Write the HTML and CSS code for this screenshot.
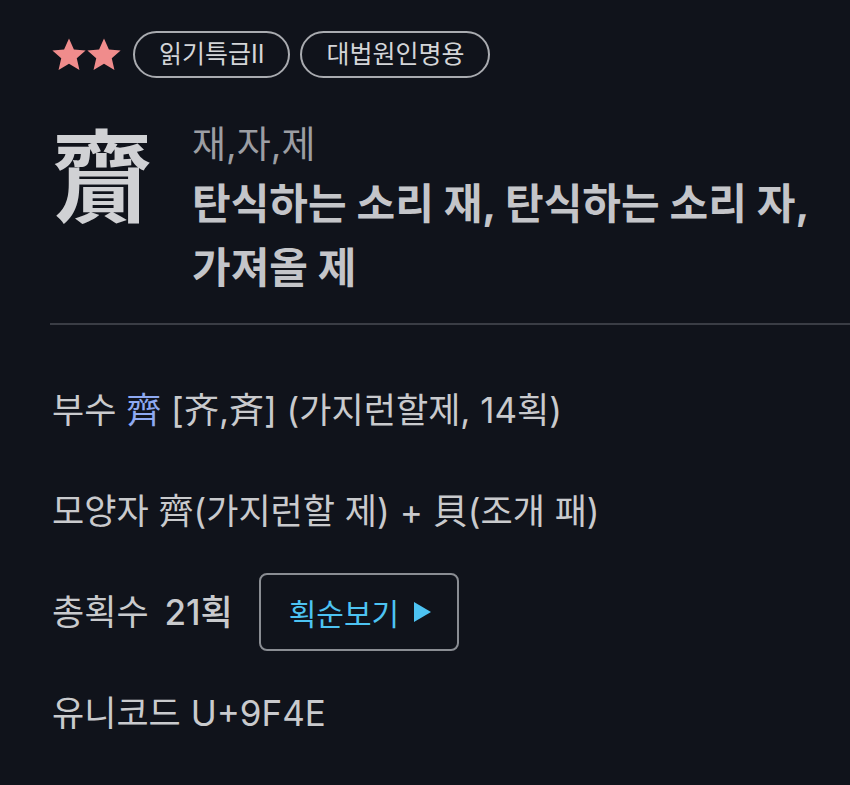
FILE: index.html
```html
<!DOCTYPE html>
<html lang="ko">
<head>
    <meta charset="UTF-8">
    <meta name="viewport" content="width=device-width, initial-scale=1.0">
    <title>齎 - 한자 상세</title>
    <link rel="stylesheet" href="styles.css">
</head>
<body>
    <div class="page">
        <div class="tags">
            <div class="stars">
                <svg width="38" height="38" viewBox="0 0 24 24"><path d="M12 1.5l3.1 7 7.4.6-5.6 4.9 1.7 7.4L12 17.5l-6.6 3.9 1.7-7.4L1.5 9.1l7.4-.6z"/></svg>
                <svg width="38" height="38" viewBox="0 0 24 24"><path d="M12 1.5l3.1 7 7.4.6-5.6 4.9 1.7 7.4L12 17.5l-6.6 3.9 1.7-7.4L1.5 9.1l7.4-.6z"/></svg>
            </div>
            <span class="pill">읽기특급II</span>
            <span class="pill">대법원인명용</span>
        </div>

        <div class="head">
            <div class="hanja">齎</div>
            <div class="info">
                <div class="readings">재,자,제</div>
                <div class="meaning">탄식하는 소리 재, 탄식하는 소리 자, 가져올 제</div>
            </div>
        </div>
    </div>

    <hr class="divider">

    <div class="page details">
        <div class="row">부수 <span class="radical">齊</span> [齐,斉] (가지런할제, 14획)</div>
        <div class="row">모양자 齊(가지런할 제) + 貝(조개 패)</div>
        <div class="row row-flex">
            <span>총획수 <span class="count">21획</span></span>
            <button class="stroke-btn">획순보기
                <svg class="arrow" width="17" height="20" viewBox="0 0 17 20"><path d="M0 0L17 10L0 20z"/></svg>
            </button>
        </div>
        <div class="row">유니코드 U+9F4E</div>
    </div>
</body>
</html>
```

FILE: styles.css
```css
body {
    font-family: Inter, "Noto Sans CJK KR", sans-serif;
    background-color: #10131b;
    color: #c9cacd;
    margin: 0;
    padding: 0;
}

.page {
    padding-left: 52px;
    padding-right: 20px;
}

.tags {
    display: flex;
    align-items: center;
    gap: 10px;
    padding-top: 31px;
}

.stars {
    display: flex;
    margin-left: -2px;
    margin-right: 3px;
}

.stars svg {
    fill: #f08c8c;
    margin-right: -3px;
}

.pill {
    border: 2px solid #a9abb0;
    border-radius: 24px;
    padding: 0 24px;
    height: 43px;
    line-height: 43px;
    font-size: 25px;
    color: #d4d5d8;
}

.head {
    display: flex;
    margin-top: 43px;
}

.hanja {
    font-family: "Noto Sans CJK KR", sans-serif;
    font-weight: bold;
    font-size: 100px;
    line-height: 1;
    width: 140px;
    flex-shrink: 0;
    color: #d0d1d4;
}

.info {
    flex: 1;
}

.readings {
    font-size: 37px;
    line-height: 48px;
    color: #9c9ea3;
}

.meaning {
    font-size: 42px;
    font-weight: bold;
    line-height: 64px;
    margin-top: 3px;
    color: #c4c5c9;
}

.divider {
    border: none;
    border-top: 2px solid #3a3d45;
    margin: 23px 0 0 50px;
}

.details {
    padding-top: 61px;
}

.row {
    font-size: 35px;
    line-height: 48px;
    height: 48px;
    margin-bottom: 53px;
    white-space: nowrap;
}

.row-flex {
    display: flex;
    align-items: center;
}

.count {
    font-weight: 500;
    margin-left: 6px;
}

.radical {
    color: #8ea9f2;
}

.stroke-btn {
    font-family: inherit;
    font-size: 30px;
    color: #4dc3f2;
    background: transparent;
    border: 2px solid #8a8d93;
    border-radius: 8px;
    height: 78px;
    padding: 0 26px 0 28px;
    margin-left: 26px;
    flex-shrink: 0;
    display: flex;
    align-items: center;
    gap: 15px;
}

.stroke-btn .arrow {
    fill: #4dc3f2;
}
```
